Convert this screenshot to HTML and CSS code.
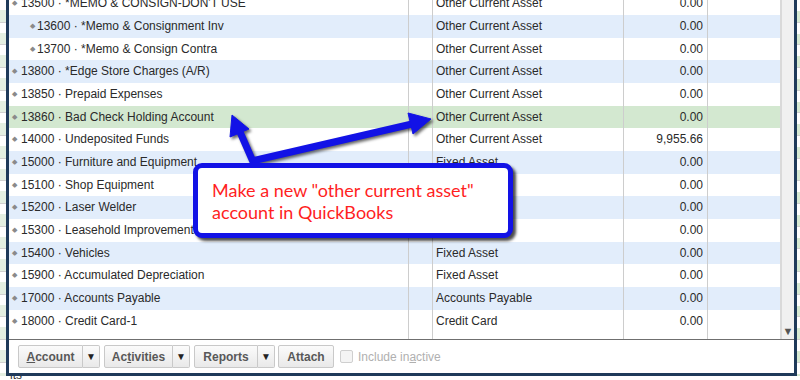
FILE: index.html
```html
<!DOCTYPE html>
<html lang="en">
<head>
  <meta charset="UTF-8" />
  <title>Chart of Accounts</title>
  <link rel="stylesheet" href="styles.css">
</head>
<body>
  <div class="page">
    <div class="edge edge-left"></div>

    <div class="window">
      <div class="list">
        <div class="rows">
          <div class="row">
            <div class="cell name"><span class="dot">◆</span>13500 · *MEMO &amp; CONSIGN-DON'T USE</div>
            <div class="cell"></div><div class="cell type">Other Current Asset</div><div class="cell bal">0.00</div><div class="cell"></div>
          </div>
          <div class="row alt">
            <div class="cell name sub"><span class="dot">◆</span>13600 · *Memo &amp; Consignment Inv</div>
            <div class="cell"></div><div class="cell type">Other Current Asset</div><div class="cell bal">0.00</div><div class="cell"></div>
          </div>
          <div class="row">
            <div class="cell name sub"><span class="dot">◆</span>13700 · *Memo &amp; Consign Contra</div>
            <div class="cell"></div><div class="cell type">Other Current Asset</div><div class="cell bal">0.00</div><div class="cell"></div>
          </div>
          <div class="row alt">
            <div class="cell name"><span class="dot">◆</span>13800 · *Edge Store Charges (A/R)</div>
            <div class="cell"></div><div class="cell type">Other Current Asset</div><div class="cell bal">0.00</div><div class="cell"></div>
          </div>
          <div class="row">
            <div class="cell name"><span class="dot">◆</span>13850 · Prepaid Expenses</div>
            <div class="cell"></div><div class="cell type">Other Current Asset</div><div class="cell bal">0.00</div><div class="cell"></div>
          </div>
          <div class="row selected">
            <div class="cell name"><span class="dot">◆</span>13860 · Bad Check Holding Account</div>
            <div class="cell"></div><div class="cell type">Other Current Asset</div><div class="cell bal">0.00</div><div class="cell"></div>
          </div>
          <div class="row">
            <div class="cell name"><span class="dot">◆</span>14000 · Undeposited Funds</div>
            <div class="cell"></div><div class="cell type">Other Current Asset</div><div class="cell bal">9,955.66</div><div class="cell"></div>
          </div>
          <div class="row alt">
            <div class="cell name"><span class="dot">◆</span>15000 · Furniture and Equipment</div>
            <div class="cell"></div><div class="cell type">Fixed Asset</div><div class="cell bal">0.00</div><div class="cell"></div>
          </div>
          <div class="row">
            <div class="cell name"><span class="dot">◆</span>15100 · Shop Equipment</div>
            <div class="cell"></div><div class="cell type">Fixed Asset</div><div class="cell bal">0.00</div><div class="cell"></div>
          </div>
          <div class="row alt">
            <div class="cell name"><span class="dot">◆</span>15200 · Laser Welder</div>
            <div class="cell"></div><div class="cell type">Fixed Asset</div><div class="cell bal">0.00</div><div class="cell"></div>
          </div>
          <div class="row">
            <div class="cell name"><span class="dot">◆</span>15300 · Leasehold Improvements</div>
            <div class="cell"></div><div class="cell type">Fixed Asset</div><div class="cell bal">0.00</div><div class="cell"></div>
          </div>
          <div class="row alt">
            <div class="cell name"><span class="dot">◆</span>15400 · Vehicles</div>
            <div class="cell"></div><div class="cell type">Fixed Asset</div><div class="cell bal">0.00</div><div class="cell"></div>
          </div>
          <div class="row">
            <div class="cell name"><span class="dot">◆</span>15900 · Accumulated Depreciation</div>
            <div class="cell"></div><div class="cell type">Fixed Asset</div><div class="cell bal">0.00</div><div class="cell"></div>
          </div>
          <div class="row alt">
            <div class="cell name"><span class="dot">◆</span>17000 · Accounts Payable</div>
            <div class="cell"></div><div class="cell type">Accounts Payable</div><div class="cell bal">0.00</div><div class="cell"></div>
          </div>
          <div class="row">
            <div class="cell name"><span class="dot">◆</span>18000 · Credit Card-1</div>
            <div class="cell"></div><div class="cell type">Credit Card</div><div class="cell bal">0.00</div><div class="cell"></div>
          </div>
          <div class="row filler">
            <div class="cell"></div><div class="cell"></div><div class="cell"></div><div class="cell"></div><div class="cell"></div>
          </div>
        </div>
        <div class="scrollbar">
          <span class="arrow-down">▼</span>
        </div>
      </div>

      <div class="toolbar">
        <div class="btn-group">
          <button class="btn"><u>A</u>ccount</button><button class="btn drop">▼</button>
        </div>
        <div class="btn-group">
          <button class="btn">Ac<u>t</u>ivities</button><button class="btn drop">▼</button>
        </div>
        <div class="btn-group">
          <button class="btn">Reports</button><button class="btn drop">▼</button>
        </div>
        <button class="btn single">Attach</button>
        <label class="inactive"><span class="check"></span>Include in<u>a</u>ctive</label>
      </div>
    </div>

    <div class="edge edge-right"></div>
  </div>
  <div class="below"><span>its</span></div>

  <!-- annotation overlay -->
  <svg class="arrows" width="800" height="380" viewBox="0 0 800 380">
    <g fill="#1212e6" stroke="#1212e6" stroke-linejoin="round">
      <line x1="254" y1="164" x2="240" y2="132" stroke-width="7" />
      <polygon points="232,115 249,129 230,137" stroke-width="1" />
      <line x1="252" y1="161" x2="412" y2="124" stroke-width="7" />
      <polygon points="431,119 413,134 408,113" stroke-width="1" />
    </g>
  </svg>
  <div class="callout">Make a new "other current asset"<br>account in QuickBooks</div>
</body>
</html>
```

FILE: styles.css
```css
body { margin: 0; width: 800px; height: 380px; overflow: hidden; background: #fff; font-family: "Liberation Sans", Arial, sans-serif; font-size: 12px; color: #2a2a2a; position: relative; }
.page { display: flex; height: 376px; }
.edge { background: repeating-linear-gradient(to bottom, #fff 0, #fff 21.67px, #d6d6d6 21.67px, #d6d6d6 22.67px); }
.edge-left { width: 6px; background: repeating-linear-gradient(to bottom, #fff 0, #fff 10px, #e4efe2 10px, #e4efe2 21.67px, #d0d0d0 21.67px, #d0d0d0 22.67px); }
.edge-right { width: 3px; background: repeating-linear-gradient(to bottom, #fff 0, #fff 11px, #d7ead3 11px, #d7ead3 21.67px, #cfcfcf 21.67px, #cfcfcf 22.67px); }
.window { width: 785px; border: 3px solid #1f3a5a; border-top: none; display: flex; flex-direction: column; background: #fff; }
.list { height: 339px; display: flex; border-bottom: 1px solid #6f6f6f; overflow: hidden; }
.rows { width: 771px; display: flex; flex-direction: column; margin-top: -7.67px; }
.row { display: grid; grid-template-columns: 400px 24px 191px 84px 72px; height: 22.67px; line-height: 22.67px; flex-shrink: 0; }
.row.alt { background: #e2edfb; }
.row.selected { background: #d3e8d0; }
.row.filler { flex: 1; }
.cell { border-right: 1px solid #cdcdcd; white-space: nowrap; overflow: hidden; }
.cell:last-child { border-right: none; }
.name { padding-left: 3px; }
.name.sub { padding-left: 21px; }
.dot { font-size: 7px; color: #8a8a8a; display: inline-block; width: 9px; vertical-align: top; }
.name.sub .dot { width: 7px; }
.type { padding-left: 3px; }
.bal { text-align: right; padding-right: 4px; }
.scrollbar { width: 14px; background: #f0f0f0; border-left: 2px solid #d9d9d9; box-sizing: border-box; display: flex; flex-direction: column; justify-content: flex-end; align-items: center; }
.arrow-down { font-size: 11px; line-height: 11px; color: #555; margin-bottom: 2px; }
.toolbar { flex: 1; display: flex; align-items: flex-start; gap: 4px; padding: 5px 0 0 9px; }
.btn-group { display: flex; }
.btn { height: 23px; border: 1px solid #c9c9c9; background: linear-gradient(#fbfbfb, #e9e9e9); font-family: "Liberation Sans", Arial, sans-serif; font-weight: bold; font-size: 12px; color: #585858; padding: 0; cursor: pointer; }
.btn-group .btn:first-child { border-radius: 2px 0 0 2px; }
.btn.drop { width: 17px; font-size: 10px; color: #222; border-left: none; border-radius: 0 2px 2px 0; }
.btn-group:nth-child(1) .btn:first-child { width: 65px; }
.btn-group:nth-child(2) .btn:first-child { width: 69px; }
.btn-group:nth-child(3) .btn:first-child { width: 64px; }
.btn.single { width: 56px; border-radius: 2px; margin-left: -1px; }
.inactive { display: flex; align-items: center; height: 23px; color: #b0b0b0; margin-left: 2px; }
.check { width: 11px; height: 11px; border: 1px solid #cfcfcf; border-radius: 2px; background: #f4f4f4; margin-right: 5px; }
.below { height: 4px; overflow: hidden; position: relative; }
.below span { position: absolute; left: 10px; top: -8px; font-size: 12px; color: #333; }
.arrows { position: absolute; left: 0; top: 0; filter: drop-shadow(2px 2px 1.5px rgba(0, 0, 0, 0.6)); }
.callout { position: absolute; left: 193px; top: 163px; width: 320px; height: 75px; box-sizing: border-box; border: 5px solid #1212e6; border-radius: 9px; background: #fff; box-shadow: 3px 3px 3px rgba(0, 0, 0, 0.7); padding: 11px 0 0 14px; font-family: Lato, "Open Sans", sans-serif; font-size: 18px; line-height: 22px; color: #ff1f1f; }
```
